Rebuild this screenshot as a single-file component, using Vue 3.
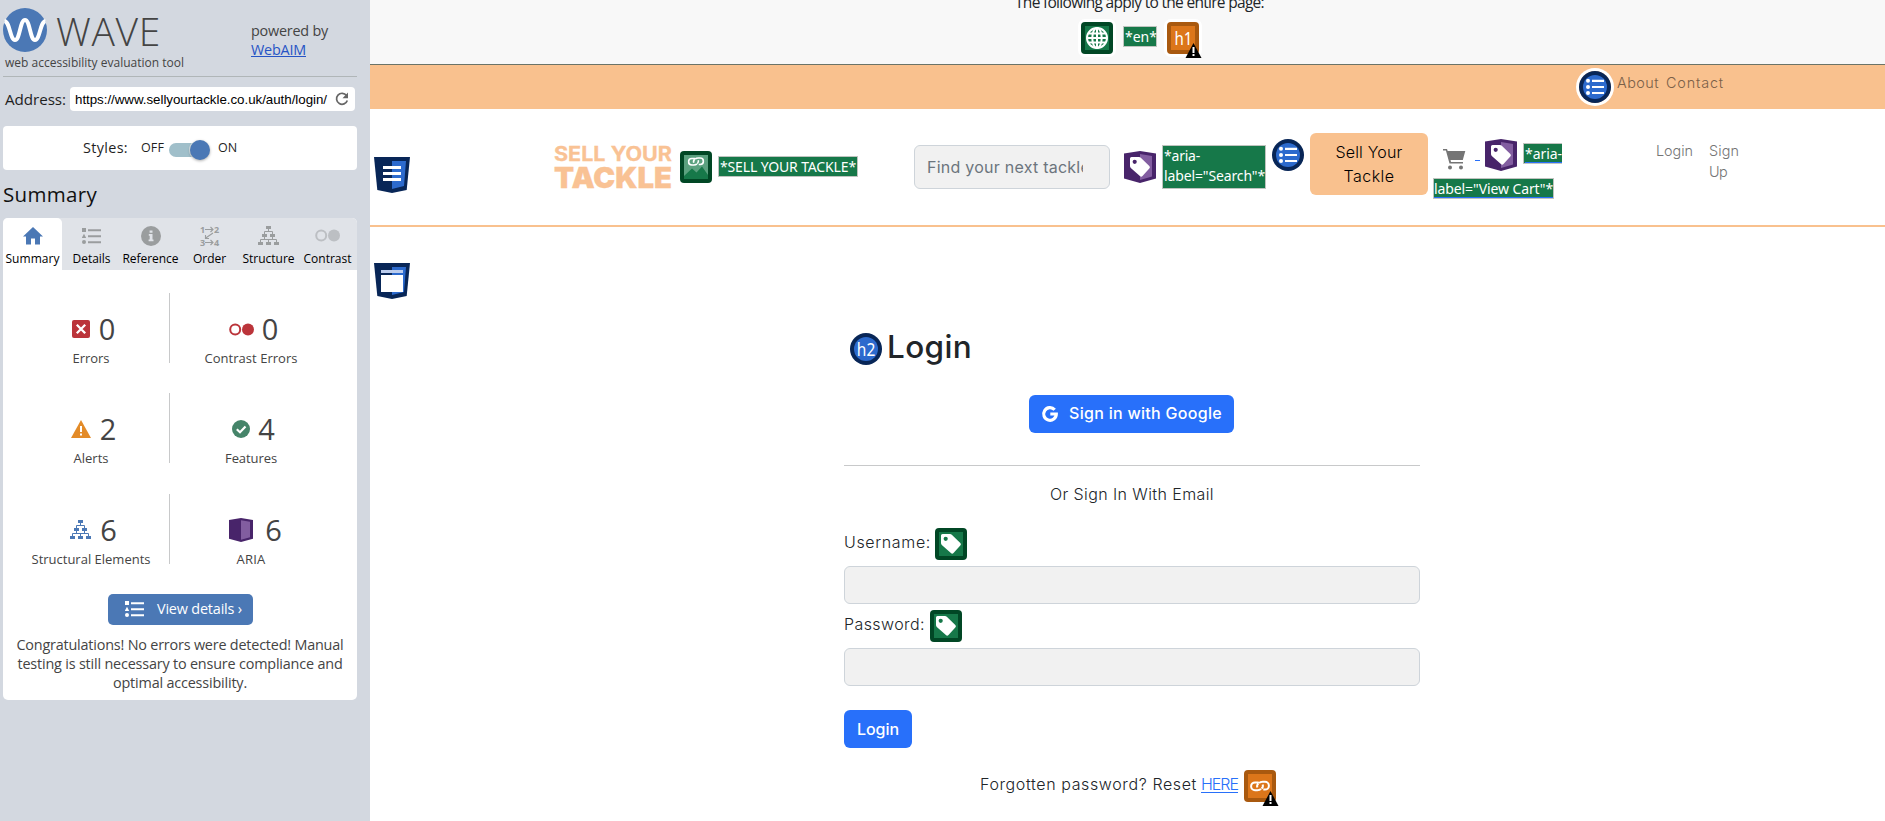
<script setup>
// v-fit="width": tracks the text so that it spans the given width in pixels
const vFit = {
  mounted(el, { value }) {
    const range = document.createRange()
    range.selectNodeContents(el)
    const natural = range.getBoundingClientRect().width
    const count = el.textContent.length
    el.style.letterSpacing = ((value - natural) / count).toFixed(3) + 'px'
  }
}

const tabs = [
  { label: 'Summary', icon: 'home', w: 20, h: 18, fit: 54 },
  { label: 'Details', icon: 'list', w: 19, h: 16, fit: 38 },
  { label: 'Reference', icon: 'info', w: 20, h: 20, fit: 56 },
  { label: 'Order', icon: 'order', w: 20, h: 20, fit: 33 },
  { label: 'Structure', icon: 'tree', w: 21, h: 19, fit: 52 },
  { label: 'Contrast', icon: 'contrast', w: 25, h: 13, fit: 48 }
]

const stats = [
  { n: 0, label: 'Errors', icon: 'error', w: 18, h: 18, fit: 37 },
  { n: 0, label: 'Contrast Errors', icon: 'contrast', w: 25, h: 13, fit: 93 },
  { n: 2, label: 'Alerts', icon: 'alert', w: 20, h: 18, fit: 35 },
  { n: 4, label: 'Features', icon: 'check', w: 18, h: 18, fit: 52 },
  { n: 6, label: 'Structural Elements', icon: 'tree', w: 21, h: 19, fit: 119 },
  { n: 6, label: 'ARIA', icon: 'aria', w: 24, h: 24, fit: 29 }
]
</script>

<template>
  <div class="app">
    <svg class="defs" width="0" height="0">
      <defs>
        <symbol id="home" viewBox="0 0 20 18">
          <path fill="currentColor" d="M10 0 20 9.500h-3V17.500h-5v-6H8v6H3v-8H0z" />
        </symbol>
        <symbol id="list" viewBox="0 0 19 16">
          <path fill="currentColor" d="M0 0h4v4H0zM2 5.800l2.200 4.200H-.2zM6 1.200h13v2H6zM6 7.200h13v2H6zM6 13.200h13v2H6z" />
          <circle cx="2" cy="14" r="2" fill="currentColor" />
        </symbol>
        <symbol id="info" viewBox="0 0 20 20">
          <circle cx="10" cy="10" r="10" fill="currentColor" />
          <path fill="#e0e3e8" d="M8.600 4.500h2.900v2.200H8.600zM7.800 8h3.700v5.600h1v1.700H7.600v-1.700h1.100V9.700h-.9z" />
        </symbol>
        <symbol id="order" viewBox="0 0 20 20">
          <g fill="currentColor" font-family="Open Sans" font-weight="700" font-size="9">
            <text x="0" y="6.600">1</text><text x="14" y="6.600">2</text>
            <text x="0" y="19.600">3</text><text x="14" y="19.600">4</text>
          </g>
          <path fill="none" stroke="currentColor" stroke-width="1.100" d="M5 3.500h8M10.500 1l2.500 2.500L10.500 6M5 16.500h8M10.500 14l2.500 2.500-2.500 2.500M13 7l-8 5.500M5.500 9v3.500H9" />
        </symbol>
        <symbol id="tree" viewBox="0 0 21 19">
          <path fill="currentColor" d="M8 0h5v3H8zM4 8h5v3H4zM12 8h5v3h-5zM0 16h5v3H0zM8 16h5v3H8zM16 16h5v3h-5z" />
          <path fill="none" stroke="currentColor" d="M10.500 3v2.500M6.500 8V5.500h8V8M6.500 11v2.500M14.500 11v2.500M2.500 16v-2.500h16V16M10.500 13.500V16" />
        </symbol>
        <symbol id="contrast" viewBox="0 0 25 13">
          <circle cx="6.200" cy="6.500" r="5" fill="none" stroke="currentColor" stroke-width="2" />
          <circle cx="19" cy="6.500" r="6" fill="currentColor" />
        </symbol>
        <symbol id="error" viewBox="0 0 18 18">
          <rect width="18" height="18" rx="2" fill="#bb343a" />
          <path stroke="#fff" stroke-width="2.300" d="m4.800 4.800 8.400 8.400M13.200 4.800l-8.400 8.400" />
        </symbol>
        <symbol id="alert" viewBox="0 0 20 18">
          <path fill="#e38b28" d="M10 0 20 18H0z" />
          <path fill="#fff" d="M9 6h2v6H9zM9 13.600h2v2H9z" />
        </symbol>
        <symbol id="check" viewBox="0 0 18 18">
          <circle cx="9" cy="9" r="9" fill="#458469" />
          <path fill="none" stroke="#fff" stroke-width="2.200" d="m4.800 9.200 3.200 3 5.500-5.700" />
        </symbol>
        <symbol id="aria" viewBox="0 0 32 32">
          <path fill="#48246a" d="M0 2.500 16 0l16 2.500v25L16 32 0 27.500z" />
          <path fill="#825da0" d="m16 3 12 2v20.500L16 29z" />
        </symbol>
        <symbol id="tag" viewBox="0 0 20 20">
          <path fill="#fff" fill-rule="evenodd" d="M1.500 0H9q1 0 1.800.8l8.500 8.200q1.200 1.300 0 2.500L12.500 19q-1.300 1.400-2.600 0L.8 11Q0 10.200 0 9V1.500Q0 0 1.500 0zM4.700 2.700a2.100 2.100 0 1 0 0 4.200 2.100 2.100 0 0 0 0-4.200z" />
        </symbol>
        <symbol id="chain" viewBox="0 0 20 12">
          <path fill="none" stroke="#fff" stroke-width="2" d="M11 8.800Q9.800 10.200 7.300 10.200H5a3.900 3.900 0 0 1 0-7.800h3.700M11.500 8.500q2-1.300 1.200-4M9 3.200Q10.200 1.800 12.700 1.800H15a3.900 3.900 0 0 1 0 7.800h-1.700M8.500 3.500q-2 1.300-1.200 4" />
        </symbol>
        <symbol id="greenbox" viewBox="0 0 32 32">
          <rect width="32" height="32" rx="4" fill="#014725" />
          <rect x="4" y="4" width="24" height="24" fill="#167849" />
        </symbol>
        <symbol id="orangebox" viewBox="0 0 32 32">
          <rect width="32" height="32" rx="4" fill="#a9590f" />
          <rect x="4" y="4" width="24" height="24" fill="#dc761a" />
        </symbol>
        <symbol id="warn" viewBox="0 0 16 15">
          <path fill="#000" d="m8 0 8 15H0z" />
          <path fill="#fff" d="M7 4h2v6H7zM7 11h2v2H7z" />
        </symbol>
        <symbol id="ul" viewBox="0 0 32 32">
          <circle cx="16" cy="16" r="16" fill="#082657" />
          <circle cx="16" cy="16" r="12" fill="#2c6acd" />
          <path stroke="#fff" stroke-width="2.200" d="M13 9.800h12M13 16h12M13 22h12" />
          <g fill="#fff"><circle cx="9" cy="9.800" r="2" /><circle cx="9" cy="16" r="2" /><circle cx="9" cy="22" r="2" /></g>
        </symbol>
        <symbol id="shield" viewBox="0 0 36 36">
          <path fill="#082657" d="M0 0h36l-3.300 33L18 36 3.300 33z" />
          <path fill="#2c6acd" d="M18 4h14l-2 25-12 3z" />
        </symbol>
      </defs>
    </svg>

    <aside class="side">
      <header class="brand">
        <div>
          <div class="logo">
            <svg width="44" height="44" viewBox="0 0 44 44">
              <circle cx="22" cy="22" r="22" fill="#4b78b5" />
              <path fill="none" stroke="#fff" stroke-width="4" d="M1.500 13C7 14 7 32 12 32S17 12 22 12 27 32 32 32 37 14 42.500 13" />
            </svg>
            <span v-fit="105" class="wave">WAVE</span>
          </div>
          <div class="tagline"><span v-fit="179">web accessibility evaluation tool</span></div>
        </div>
        <div class="powered">
          <div><span v-fit="77">powered by</span></div>
          <div><a v-fit="55">WebAIM</a></div>
        </div>
      </header>

      <div class="address">
        <span v-fit="61">Address:</span>
        <div class="url">
          <span v-fit="252">https://www.sellyourtackle.co.uk/auth/login/</span>
          <svg width="14" height="14" viewBox="0 0 14 14">
            <path fill="none" stroke="#666" stroke-width="1.700" d="M11.500 3.500A5.500 5.500 0 1 0 12.300 8.500" />
            <path fill="#666" d="M13 .5v5.700H7.500z" />
          </svg>
        </div>
      </div>

      <div class="styles">
        <span v-fit="45">Styles:</span>
        <small v-fit="23">OFF</small>
        <i class="toggle"><b></b></i>
        <small v-fit="19">ON</small>
      </div>

      <h1 class="title"><span v-fit="94">Summary</span></h1>

      <section class="panel">
        <nav class="tabs">
          <div v-for="(t, i) in tabs" :key="t.label" class="tab" :class="['tab-' + t.icon, { active: i === 0 }]">
            <div class="tabicon"><svg :width="t.w" :height="t.h"><use :href="'#' + t.icon" /></svg></div>
            <div class="tablabel"><span v-fit="t.fit">{{ t.label }}</span></div>
          </div>
        </nav>
        <div class="stats">
          <div v-for="s in stats" :key="s.label" class="stat" :class="'stat-' + s.icon">
            <div class="count"><svg :width="s.w" :height="s.h"><use :href="'#' + s.icon" /></svg><span>{{ s.n }}</span></div>
            <div class="statlabel"><span v-fit="s.fit">{{ s.label }}</span></div>
          </div>
        </div>
        <button class="details">
          <svg width="19" height="16"><use href="#list" /></svg>
          <span v-fit="85">View details ›</span>
        </button>
        <p class="congrats">
          <span v-fit="327">Congratulations! No errors were detected! Manual</span><br />
          <span v-fit="325">testing is still necessary to ensure compliance and</span><br />
          <span v-fit="134">optimal accessibility.</span>
        </p>
      </section>
    </aside>

    <main class="page">
      <div class="info">
        <div class="infotext"><span v-fit="249">The following apply to the entire page:</span></div>
        <div class="inforow">
          <svg class="glow" width="32" height="32" viewBox="0 0 32 32">
            <use href="#greenbox" />
            <g fill="none" stroke="#fff" stroke-width="2">
              <circle cx="16" cy="16" r="10" /><ellipse cx="16" cy="16" rx="4.700" ry="10" />
              <path d="M6 16h20M16 6v20M7.500 11.500h17M7.500 20.500h17" />
            </g>
          </svg>
          <span class="note en"><span v-fit="32">*en*</span></span>
          <span class="warned">
            <svg class="glow" width="32" height="32" viewBox="0 0 32 32">
              <use href="#orangebox" />
              <text x="7.500" y="23" textLength="18" lengthAdjust="spacingAndGlyphs" font-family="Noto Sans" font-size="18" fill="#fff">h1</text>
            </svg>
            <svg class="warn" width="17" height="15"><use href="#warn" /></svg>
          </span>
        </div>
      </div>

      <div class="topbar">
        <svg class="round" width="32" height="32"><use href="#ul" /></svg>
        <a v-fit="42" class="about">About</a>
        <a v-fit="58" class="contact">Contact</a>
      </div>

      <header class="head">
        <svg class="mark" width="36" height="36" viewBox="0 0 36 36">
          <use href="#shield" />
          <path fill="#fff" d="M9 9h18v3H9zM9 15h18v3H9zM9 21h18v3H9z" />
        </svg>
        <svg class="sell" width="120" height="48" viewBox="0 0 120 48">
          <g fill="#f9c294" stroke="#f9c294" font-family="Inter">
            <text x="0" y="18" font-size="19.500" font-weight="700" stroke-width=".3" textLength="118" lengthAdjust="spacingAndGlyphs">SELL YOUR</text>
            <text x="0" y="44.500" font-size="28.500" font-weight="900" stroke-width=".3" textLength="118" lengthAdjust="spacingAndGlyphs">TACKLE</text>
          </g>
        </svg>
        <svg class="imglink" width="32" height="32" viewBox="0 0 32 32">
          <use href="#greenbox" />
          <path fill="#5ba17f" d="M4 4h24v20l-6-8.500-5.500 6-4.500-4L4 25z" />
          <use href="#chain" x="7.500" y="5.500" width="17" height="10" />
        </svg>
        <span class="note alt"><span v-fit="136">*SELL YOUR TACKLE*</span></span>
        <div class="search"><div><span v-fit="163">Find your next tackle</span></div></div>
        <svg class="tagicon" width="32" height="32" viewBox="0 0 32 32">
          <use href="#aria" /><use href="#tag" x="6" y="6" width="20" height="20" />
        </svg>
        <span class="note aria"><span v-fit="36">*aria-</span><br /><span v-fit="101">label="Search"*</span></span>
        <svg class="navlist" width="32" height="32"><use href="#ul" /></svg>
        <button class="sellbtn"><span v-fit="67">Sell Your</span><br /><span v-fit="51">Tackle</span></button>
        <div class="cart">
          <div class="cartrow">
            <svg class="trolley" width="23" height="21" viewBox="0 0 23 21">
              <path fill="#757575" d="M0 0h4l.7 2H22.300l-2.500 9H7.500l.5 2h12v1.600H6.500L2.900 1.600H0z" />
              <circle cx="7" cy="18.600" r="2" fill="#757575" /><circle cx="18" cy="18.600" r="2" fill="#757575" />
            </svg>
            <i class="dash"></i>
            <svg width="32" height="32" viewBox="0 0 32 32">
              <use href="#aria" /><use href="#tag" x="6" y="6" width="20" height="20" />
            </svg>
            <span class="note link one"><span v-fit="37">*aria-</span></span>
          </div>
          <span class="note link two"><span v-fit="119">label="View Cart"*</span></span>
        </div>
        <a class="login"><span v-fit="37">Login</span></a>
        <a class="signup"><span v-fit="30">Sign</span><br /><span v-fit="18">Up</span></a>
      </header>

      <section class="body">
        <svg class="mark2" width="36" height="36" viewBox="0 0 36 36">
          <use href="#shield" />
          <path fill="#bbcced" d="M7 7h22v3H7z" /><path fill="#fff" d="M7 12h22v17H7z" />
        </svg>
        <div class="form">
          <h2>
            <svg width="32" height="32" viewBox="0 0 32 32">
              <circle cx="16" cy="16" r="16" fill="#082657" /><circle cx="16" cy="16" r="12" fill="#2c6acd" />
              <text x="6.800" y="22.700" textLength="18.500" lengthAdjust="spacingAndGlyphs" font-family="Noto Sans" font-size="18" fill="#fff">h2</text>
            </svg>
            <span v-fit="85">Login</span>
          </h2>
          <button class="google">
            <svg width="16" height="16" viewBox="0 0 16 16">
              <path fill="none" stroke="#fff" stroke-width="3.200" d="M12.700 3.800A6.300 6.300 0 1 0 14.300 8H8.300" />
            </svg>
            <span v-fit="153">Sign in with Google</span>
          </button>
          <hr />
          <p class="or"><span v-fit="164">Or Sign In With Email</span></p>
          <div class="label">
            <span v-fit="87">Username:</span>
            <svg class="first" width="32" height="32" viewBox="0 0 32 32"><use href="#greenbox" /><use href="#tag" x="6" y="6" width="20" height="20" /></svg>
          </div>
          <div class="field"></div>
          <div class="label">
            <span v-fit="81">Password:</span>
            <svg width="32" height="32" viewBox="0 0 32 32"><use href="#greenbox" /><use href="#tag" x="6" y="6" width="20" height="20" /></svg>
          </div>
          <div class="field"></div>
          <button class="submit"><span v-fit="42">Login</span></button>
          <p class="forgot">
            <span v-fit="217">Forgotten password? Reset</span>
            <a v-fit="37">HERE</a>
            <span class="warned">
              <svg width="32" height="32" viewBox="0 0 32 32"><use href="#orangebox" /><use href="#chain" x="6" y="10" width="20" height="12" /></svg>
              <svg class="warn" width="17" height="15"><use href="#warn" /></svg>
            </span>
          </p>
        </div>
      </section>
    </main>
  </div>
</template>

<style>
body { margin: 0; overflow: hidden; }
</style>

<style scoped>
.app { display: flex; height: 821px; overflow: hidden; background: #fff; font-family: "Open Sans", "Noto Sans", sans-serif; color: #212529; white-space: nowrap; }
.app * { box-sizing: border-box; }
.defs { position: absolute; }
svg { display: block; flex: none; overflow: visible; }
button { border: 0; padding: 0; font: inherit; white-space: nowrap; }
p, h1, h2, hr { margin: 0; }

.side { width: 370px; flex: none; background: #d3d8e0; padding: 0 13px 0 3px; font-size: 14.400px; color: #444; }
.brand { display: flex; height: 77px; border-bottom: 1px solid #b0b6b8; }
.logo { display: flex; padding-top: 8px; height: 53px; }
.wave { margin-left: 9px; font-size: 39px; line-height: 45px; font-weight: 300; }
.tagline { padding-left: 2px; width: 248px; font-size: 12px; line-height: 20px; }
.powered { padding-top: 21px; line-height: 19px; }
.powered a { color: #2754c5; text-decoration: underline; }
.address { display: flex; align-items: center; height: 44px; margin-bottom: 5px; padding-left: 2px; font-size: 15.200px; color: #1f1f1f; }
.address > span { width: 65px; }
.url { display: flex; align-items: center; width: 285px; height: 24px; padding-left: 5px; border-radius: 4px; background: #fff; color: #000; font: 13.333px "Liberation Sans", sans-serif; }
.url span { width: 260px; }
.styles { display: flex; align-items: center; height: 44px; padding-left: 80px; border-radius: 4px; background: #fff; color: #1f1f1f; line-height: 44px; }
.styles span { width: 58px; }
.styles small { font-size: 12.500px; }
.toggle { width: 36px; height: 14px; margin: 4px 13px 0 5px; border-radius: 7px; background: #a0bfca; display: flex; align-items: center; justify-content: flex-end; }
.toggle b { flex: none; width: 20px; height: 20px; margin-right: -5px; border-radius: 50%; background: #4b78b5; box-shadow: 0 1px 3px #0005, 0 0 0 1px #fff9; }
.title { font-size: 20.500px; font-weight: 400; line-height: 48px; height: 48px; color: #111; }
.panel { height: 482px; background: #fff; border-radius: 5px; }
.tabs { display: flex; height: 52px; background: #e0e3e8; border-radius: 5px 5px 0 0; }
.tab { width: 59px; text-align: center; color: #9a9d9e; }
.tab.active { background: #fff; color: #4b78b5; border-radius: 5px 5px 0 0; }
.tab-contrast { color: #bcbfc3; }
.tabicon { display: flex; align-items: center; justify-content: center; height: 32px; padding-top: 3px; }
.tablabel { font-size: 12px; line-height: 17px; color: #000; }
.stats { display: grid; grid-template-columns: 167px 162px; grid-auto-rows: 70px; row-gap: 30.400px; margin-top: 23px; }
.stat { padding-top: 21px; text-align: center; }
.stat:nth-child(odd) { padding-left: 10px; border-right: 1px solid #c8c9ca; }
.count { display: flex; align-items: center; justify-content: center; height: 30px; font-size: 29px; line-height: 30px; padding-left: 5px; }
.count span { margin-left: 9px; }
.stat-tree { color: #4b78b5; }
.stat-contrast { color: #bb343a; }
.count span, .statlabel { color: #444; }
.stat-contrast .count span, .stat-check .count span { margin-left: 8px; }
.stat-aria .count { padding-left: 9px; }
.stat-aria .count span { margin-left: 12px; }
.statlabel { margin-top: 5px; font-size: 13px; line-height: 18px; }
.details { display: flex; align-items: center; width: 145px; height: 31px; margin: 30px 0 0 105px; padding-left: 17px; border-radius: 5px; background: #4b78b5; color: #fff; line-height: 30px; }
.details span { margin-left: 13px; padding-bottom: 1px; }
.congrats { margin-top: 10px; line-height: 19px; text-align: center; }

.page { flex: 1; min-width: 0; font-family: Inter, "Open Sans", sans-serif; font-size: 16px; font-weight: 300; }
.info { height: 65px; background: #f8f8f8; border-bottom: 1px solid #6b7468; overflow: hidden; font-family: "Open Sans", sans-serif; font-weight: 400; }
.infotext { margin: -10px 0 8px 645px; height: 24px; line-height: 24px; font-size: 15.500px; }
.inforow { display: flex; padding-left: 711px; }
.glow { border-radius: 4px; box-shadow: 0 0 0 3px #fff; }
.note { display: block; flex: none; height: 21px; border: 1px solid #bfc4bf; background: #167849; color: #fff; font: 400 14px/19px "Noto Sans", sans-serif; padding-left: 1px; }
.en { width: 34px; margin: 4px 10px 0; }
.warned { position: relative; display: block; flex: none; width: 32px; height: 32px; }
.warn { position: absolute; left: 18px; top: 21px; }
.topbar { display: flex; height: 44px; background: #f9c18e; color: #7a6048; font-size: 14.400px; }
.round { margin: 6px 6px 0 1209px; border-radius: 50%; box-shadow: 0 0 0 3px #fff; }
.about, .contact { line-height: 36px; width: 49px; }

.head { display: flex; align-items: flex-start; height: 118px; border-bottom: 2px solid #f9c18e; }
.mark { margin: 48px 0 0 4px; }
.sell { margin: 34px 0 0 144px; }
.imglink { margin: 42px 0 0 6px; }
.alt { width: 140px; margin: 47px 0 0 6px; }
.search { width: 196px; height: 44px; margin: 36px 0 0 56px; padding: 0 27px 0 12px; border: 1px solid #ced4da; border-radius: 6px; background: #f1f1f1; color: #6c757d; line-height: 42px; font-weight: 400; font-size: 16px; }
.search div { overflow: hidden; width: 156px; }
.tagicon { margin: 42px 0 0 14px; }
.aria { width: 104px; height: 44px; margin: 36px 0 0 6px; line-height: 20px; }
.navlist { margin: 30px 0 0 6px; }
.sellbtn { width: 118px; height: 62px; margin: 24px 0 0 6px; border-radius: 6px; background: #f9c18e; color: #000; line-height: 24px; }
.cart { width: 140px; margin: 30px 0 0 5px; }
.cartrow { display: flex; height: 39px; }
.trolley { margin: 10px 9px 0 10px; }
.dash { width: 5px; height: 1px; margin: 21px 5px 0 0; background: #2870fa; }
.one { width: 39px; margin: 4px 0 0 6px; border-right: 0; }
.two { width: 121px; padding-left: 0; }
.link { text-decoration: underline; text-decoration-color: #2870fa; text-underline-offset: 3px; }
.link span { text-decoration: inherit; }
.login { width: 53px; margin: 31px 0 0 83px; }
.login, .signup { color: #757575; font-size: 14.400px; line-height: 21px; height: 42px; }
.signup { margin-top: 31px; }

.body { display: flex; align-items: flex-start; padding: 36px 0 0 4px; }
.form { width: 576px; margin: 68px 0 0 434px; }
h2 { display: flex; align-items: center; height: 36px; padding-left: 6px; font-size: 31.500px; font-weight: 450; line-height: 32px; }
h2 span { margin-left: 5px; padding-bottom: 4px; }
.google { display: flex; align-items: center; width: 205px; height: 38px; margin: 28px 0 32px 185px; padding-left: 13px; border-radius: 6px; background: #2870fa; color: #fff; font-weight: 500; }
.google span { margin-left: 11px; padding-bottom: 2px; }
hr { border: 0; height: 1px; background: #c8c9ca; }
.or { margin: 16px 0 22px; height: 24px; line-height: 24px; text-align: center; }
.label { display: flex; height: 32px; line-height: 29px; margin: 6px 0; }
.label span { width: 87px; }
.label svg { margin-left: -1px; }
.label svg.first { margin-left: 4px; }
.field { height: 38px; border: 1px solid #ced4da; border-radius: 6px; background: #f1f1f1; }
.submit { display: block; width: 68px; height: 38px; margin-top: 24px; padding-bottom: 1px; border-radius: 6px; background: #2870fa; color: #fff; font-weight: 500; }
.forgot { display: flex; margin: 22px 0 0 136px; line-height: 29px; }
.forgot a { margin: 0 6px 0 4px; color: #2870fa; text-decoration: underline; text-underline-offset: 2px; }
</style>
